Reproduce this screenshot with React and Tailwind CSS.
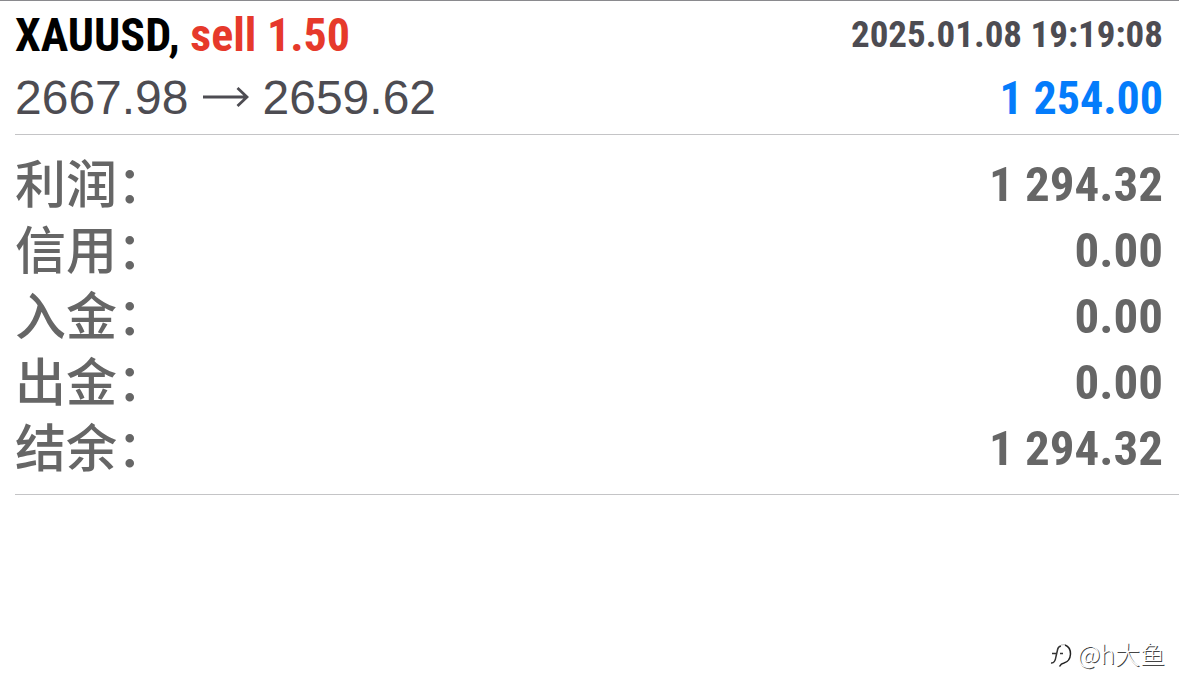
const rows = [
  ['利润', '1 294.32'],
  ['信用', '0.00'],
  ['入金', '0.00'],
  ['出金', '0.00'],
  ['结余', '1 294.32'],
];

const narrow = "font-['Roboto_Condensed','Liberation_Sans',sans-serif] font-bold";

function Deal() {
  return (
    <section className="ml-[15px] border-b border-[#c4c4c6] pr-4 pt-[3px] pb-1">
      <div className="flex h-[62px] items-center justify-between">
        <h1 className={`${narrow} text-[46px] leading-[62px] text-black`}>
          XAUUSD, <span className="text-[#e6392b]">sell 1.50</span>
        </h1>
        <time className={`${narrow} text-[37px] leading-[62px] text-[#4d4c52]`}>
          2025.01.08 19:19:08
        </time>
      </div>
      <div className="flex h-16 items-center justify-between">
        <p className="flex items-center gap-[14px] font-['Liberation_Sans',sans-serif] text-[48px] leading-[60px] text-[#4d4c52]">
          2667.98
          <svg viewBox="0 0 46 22" className="h-[22px] w-[46px]" fill="none" stroke="currentColor" strokeWidth="2.8" aria-label="to">
            <path d="M0 10H44M34.500 1L44 10L34.500 19" />
          </svg>
          2659.62
        </p>
        <strong className={`${narrow} text-[46px] leading-[60px] text-[#047cfb]`}>1 254.00</strong>
      </div>
    </section>
  );
}

function Summary() {
  return (
    <dl className="ml-[15px] border-b border-[#c4c4c6] pr-4 pt-[15px] pb-[14px] text-[#666]">
      {rows.map(([label, value]) => (
        <div key={label} className="flex h-[66px] items-start justify-between">
          <dt className="font-['Noto_Sans_CJK_SC',sans-serif] text-[51px] leading-[62px] font-medium">{label}：</dt>
          <dd className={`${narrow} text-[49px] leading-[70px]`}>{value}</dd>
        </div>
      ))}
    </dl>
  );
}

function Signature() {
  return (
    <footer className="mt-auto flex items-center justify-end gap-1 pr-[14px] pb-[29px] text-white">
      <svg viewBox="0 0 24 28" className="h-7 w-6" fill="none" strokeWidth="1.500">
        <path stroke="#333" d="M1 24Q5 24.500 6 17.500L7.500 11Q8 7.500 11 7M2 14.500H7M10 14.500H13" />
        <path stroke="#222" d="M15 6Q20.500 8 20.500 15Q20 22.500 14 24Q11 24.500 9.500 27.500" />
        <path stroke="#bbb" strokeWidth="1" d="M11 6L15 5.500" />
      </svg>
      <span className="font-['Noto_Sans_CJK_SC',sans-serif] text-[25px] leading-9 font-light [text-shadow:1px_1px_0_#444]">@h大鱼</span>
    </footer>
  );
}

export default function App() {
  return (
    <main className="flex min-h-screen flex-col border-t border-[#8a8a8e] bg-white">
      <Deal />
      <Summary />
      <Signature />
    </main>
  );
}
